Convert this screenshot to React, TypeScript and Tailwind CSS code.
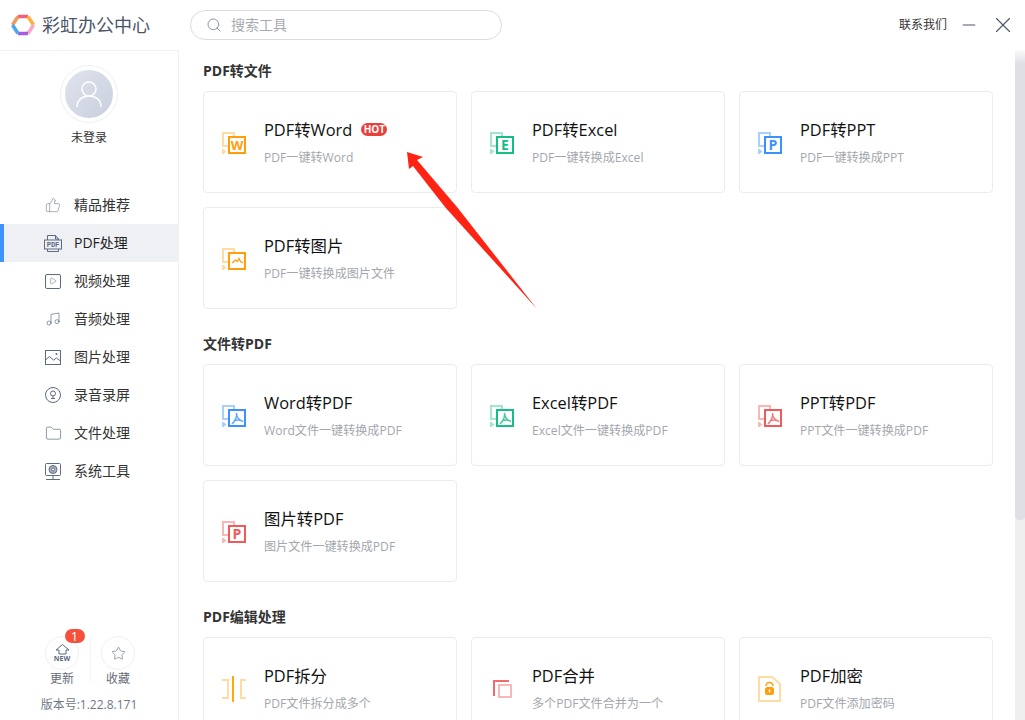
import { Search, X, Minus, ThumbsUp, Play, Music, Star, Folder } from 'lucide-react';

const FONT = "font-['Open_Sans','Noto_Sans_CJK_SC',sans-serif]";

type Tone = { main: string; pale: string };
const ORANGE: Tone = { main: '#ff9d0a', pale: '#ffdca3' };
const GREEN: Tone = { main: '#13bf85', pale: '#a3e6cf' };
const BLUE: Tone = { main: '#3d91ff', pale: '#a8cfff' };
const RED: Tone = { main: '#f25a5a', pale: '#f9b8b8' };

const DocIcon = ({ tone, inner }: { tone: Tone; inner: string }) => (
  <svg width="24" height="23" viewBox="0 0 24 23" className="shrink-0">
    <rect x="1" y="1" width="11" height="13" fill="none" stroke={tone.pale} strokeWidth="2" />
    <path d="M0 17h1.500l3 2.500l-3 2.500H0z" fill={tone.pale} />
    <rect x="7" y="5" width="16" height="16" fill="#fff" stroke={tone.main} strokeWidth="2" />
    {inner === 'pdf' && (
      <path
        d="M14.500 8c.5 4-1.500 8-4.500 11M14.500 8c0 4 2.500 7 6.500 8.500M12.500 15.500c2.500-.5 5-.5 7 0"
        fill="none"
        stroke={tone.main}
        strokeOpacity="0.8"
        strokeWidth="1.500"
      />
    )}
    {inner === 'img' && (
      <path d="M10 15l3.500-3l2 1.500l1.500-3l1.500 3l2.500 1.500" fill="none" stroke={tone.main} strokeWidth="1.300" />
    )}
    {inner !== 'pdf' && inner !== 'img' && (
      <text
        x="15"
        y="18"
        textAnchor="middle"
        fontSize={inner === 'W' ? 13 : 14}
        fontWeight="700"
        fontFamily="Open Sans, sans-serif"
        fill={tone.main}
      >
        {inner}
      </text>
    )}
  </svg>
);

const SplitIcon = () => (
  <svg width="24" height="26" viewBox="0 0 24 26" className="shrink-0">
    <path d="M0 4h6v18H0" fill="none" stroke="#ffdca3" strokeWidth="2" />
    <path d="M24 4h-5v18h5" fill="none" stroke="#ffdca3" strokeWidth="2" />
    <rect x="10" y="0" width="2" height="26" fill="#ffa90a" />
  </svg>
);

const MergeIcon = () => (
  <svg width="24" height="26" viewBox="0 0 24 26" className="shrink-0">
    <path d="M4 20V5h15" fill="none" stroke="#f26a6a" strokeWidth="2" />
    <rect x="9" y="9" width="12" height="12" fill="none" stroke="#f9b8b8" strokeWidth="2" />
  </svg>
);

const LockIcon = () => (
  <svg width="24" height="26" viewBox="0 0 24 26" className="shrink-0">
    <path d="M1 1h13l8 7v17H1z" fill="none" stroke="#ffdca3" strokeWidth="2" />
    <path d="M8 10a3.500 3.500 0 0 1 7 0" fill="none" stroke="#ff9d0a" strokeWidth="1.500" />
    <rect x="7" y="11" width="9" height="8" rx="2.500" fill="#ff9d0a" />
    <rect x="10.800" y="13.500" width="1.500" height="3" fill="#fff" />
  </svg>
);

const PdfNavIcon = () => (
  <svg width="18" height="17" viewBox="0 0 18 17" fill="none" stroke="#5c6b82" strokeWidth="1">
    <path d="M3.500 5V.5h8l3 3.500v1M3.500 14v2.500h11V14" />
    <path d="M11.500.5V4h3" />
    <rect x=".5" y="5" width="17" height="9" />
    <text x="9" y="12.300" textAnchor="middle" fontSize="7" fontWeight="700" fontFamily="Liberation Mono, monospace" fill="#5c6b82" stroke="none">
      PDF
    </text>
  </svg>
);

const ImageNavIcon = () => (
  <svg width="16" height="15" viewBox="0 0 16 15" fill="none" stroke="#5c6b82" strokeWidth="1">
    <rect x=".5" y=".5" width="15" height="14" />
    <path d="M.5 10l4-3.500l4 3.500l3-2l4 3" />
    <circle cx="11.500" cy="4" r="1" fill="#5c6b82" stroke="none" />
  </svg>
);

const MicNavIcon = () => (
  <svg width="16" height="16" viewBox="0 0 16 16" fill="none" stroke="#5c6b82" strokeWidth="1">
    <circle cx="8" cy="8" r="7.500" />
    <circle cx="8" cy="6.500" r="2.500" />
    <path d="M8 9v2.500M6 11.500h4" />
  </svg>
);

const ToolNavIcon = () => (
  <svg width="16" height="17" viewBox="0 0 16 17" fill="none" stroke="#5c6b82" strokeWidth="1">
    <rect x=".5" y=".5" width="15" height="12" rx="1" />
    <circle cx="8" cy="6.500" r="4" fill="#aab2c0" />
    <circle cx="8" cy="6.500" r="1.500" fill="#fff" />
    <path d="M8 12.500v4M1 16.500h14" />
  </svg>
);

const PlayNavIcon = () => (
  <span className="flex h-[15px] w-[16px] items-center justify-center rounded-[2px] border border-[#5c6b82]">
    <Play size={8} strokeWidth={1.5} color="#5c6b82" />
  </span>
);

const navItems = [
  { label: '精品推荐', icon: <ThumbsUp size={16} strokeWidth={1} color="#7b879b" /> },
  { label: 'PDF处理', icon: <PdfNavIcon />, active: true },
  { label: '视频处理', icon: <PlayNavIcon /> },
  { label: '音频处理', icon: <Music size={16} strokeWidth={1} color="#5c6b82" /> },
  { label: '图片处理', icon: <ImageNavIcon /> },
  { label: '录音录屏', icon: <MicNavIcon /> },
  { label: '文件处理', icon: <Folder size={17} strokeWidth={1} color="#5c6b82" /> },
  { label: '系统工具', icon: <ToolNavIcon /> },
];

const sections = [
  {
    title: 'PDF转文件',
    cards: [
      { name: 'PDF转Word', desc: 'PDF一键转Word', icon: <DocIcon tone={ORANGE} inner="W" />, hot: true },
      { name: 'PDF转Excel', desc: 'PDF一键转换成Excel', icon: <DocIcon tone={GREEN} inner="E" /> },
      { name: 'PDF转PPT', desc: 'PDF一键转换成PPT', icon: <DocIcon tone={BLUE} inner="P" /> },
      { name: 'PDF转图片', desc: 'PDF一键转换成图片文件', icon: <DocIcon tone={ORANGE} inner="img" /> },
    ],
  },
  {
    title: '文件转PDF',
    cards: [
      { name: 'Word转PDF', desc: 'Word文件一键转换成PDF', icon: <DocIcon tone={BLUE} inner="pdf" /> },
      { name: 'Excel转PDF', desc: 'Excel文件一键转换成PDF', icon: <DocIcon tone={GREEN} inner="pdf" /> },
      { name: 'PPT转PDF', desc: 'PPT文件一键转换成PDF', icon: <DocIcon tone={RED} inner="pdf" /> },
      { name: '图片转PDF', desc: '图片文件一键转换成PDF', icon: <DocIcon tone={RED} inner="P" /> },
    ],
  },
  {
    title: 'PDF编辑处理',
    cards: [
      { name: 'PDF拆分', desc: 'PDF文件拆分成多个', icon: <SplitIcon /> },
      { name: 'PDF合并', desc: '多个PDF文件合并为一个', icon: <MergeIcon /> },
      { name: 'PDF加密', desc: 'PDF文件添加密码', icon: <LockIcon /> },
    ],
  },
];

const Logo = () => (
  <svg width="24" height="24" viewBox="0 0 24 24" fill="none" strokeWidth="3.500">
    <path d="M1.500 12L7 3.500" stroke="#f59a5a" />
    <path d="M7 3.500h10" stroke="#f4607a" />
    <path d="M17 3.500L22.500 12" stroke="#fbb040" />
    <path d="M22.500 12L17 20.500" stroke="#f7a8c4" />
    <path d="M17 20.500H7" stroke="#a95be0" />
    <path d="M7 20.500L1.500 12" stroke="#4aa8ee" />
  </svg>
);

const Card = ({ name, desc, icon, hot }: { name: string; desc: string; icon: React.ReactNode; hot?: boolean }) => (
  <div className="flex h-[102px] items-center gap-[18px] rounded-[4px] border border-[#eaecef] bg-white pl-[18px]">
    <div className="flex w-6 justify-center pt-[2px]">{icon}</div>
    <div className="flex flex-col gap-[6px] pt-1">
      <div className="flex items-center gap-[9px]">
        <span className="text-[16.4px] leading-[22px] text-[#111]">{name}</span>
        {hot && (
          <span className="mb-[2px] flex h-[13px] w-[26px] items-center justify-center rounded-full bg-[#e8403a] text-[10px] leading-none font-bold text-white">
            HOT
          </span>
        )}
      </div>
      <span className="text-[12.1px] leading-[22px] text-[#a3a7ad]">{desc}</span>
    </div>
  </div>
);

export default function App() {
  return (
    <div className={`relative flex h-[720px] w-[1025px] flex-col overflow-hidden bg-white ${FONT}`}>
      <header className="flex h-[50px] shrink-0 items-center pl-[11px]">
        <Logo />
        <span className="ml-[7px] w-[148px] text-[18px] text-[#4a5568]">彩虹办公中心</span>
        <div className="flex h-[30px] w-[312px] items-center rounded-full border border-[#d9dce3] pl-[15px]">
          <Search size={16} strokeWidth={1.5} color="#8a94a6" />
          <span className="ml-[9px] text-sm text-[#a8abb2]">搜索工具</span>
        </div>
        <span className="ml-auto text-xs text-[#333]">联系我们</span>
        <Minus size={20} strokeWidth={1.2} color="#4a5568" className="ml-3" />
        <X size={26} strokeWidth={1} color="#4a5568" className="mr-[9px] ml-[11px]" />
      </header>

      <div className="flex min-h-0 flex-1">
        <aside className="flex w-[179px] shrink-0 flex-col border-t border-r border-[#f0f1f3]">
          <div className="mt-[14px] flex flex-col items-center">
            <div className="flex h-[58px] w-[58px] items-center justify-center rounded-full border border-[#eef0f5]">
              <div className="flex h-[48px] w-[48px] items-center justify-center rounded-full bg-gradient-to-br from-[#dfe3ec] to-[#c9d0de]">
                <svg width="26" height="28" viewBox="0 0 26 28" fill="none" stroke="#fff" strokeWidth="1.500">
                  <circle cx="13" cy="9" r="7" />
                  <path d="M1 27c0-7 5-11 12-11s12 4 12 11" />
                </svg>
              </div>
            </div>
            <span className="mt-[6px] text-xs leading-[18px] text-[#333]">未登录</span>
          </div>

          <nav className="mt-[39px] flex flex-col">
            {navItems.map((item) => (
              <div
                key={item.label}
                className={`flex h-[38px] items-center border-l-4 text-sm ${
                  item.active ? 'border-[#3f93ff] bg-[#eef0f3] text-[#222]' : 'border-transparent text-[#333]'
                }`}
              >
                <span className="flex w-[70px] justify-end pr-3">
                  <span className="flex w-[18px] justify-center">{item.icon}</span>
                </span>
                <span>{item.label}</span>
              </div>
            ))}
          </nav>

          <div className="mt-auto flex flex-col items-center pb-[7px]">
            <div className="flex items-start pl-[2px]">
              <div className="relative flex w-[55px] flex-col items-center">
                <div className="flex h-[34px] w-[34px] flex-col items-center justify-center rounded-full border border-[#eef0f3]">
                  <svg width="15" height="11" viewBox="0 0 15 11" fill="none" stroke="#5c6b82" strokeWidth="1">
                    <path d="M7.500 .5L14 6h-3v4H4V6H1z" />
                  </svg>
                  <span className="text-[7px] leading-[7px] font-bold text-[#5c6b82]">NEW</span>
                </div>
                <span className="absolute top-[-7px] left-[30px] flex h-[14px] w-[20px] items-center justify-center rounded-full bg-[#f5513a] text-[13px] leading-none text-white">
                  1
                </span>
                <span className="mt-px text-xs leading-[16px] text-[#666c78]">更新</span>
              </div>
              <div className="h-[46px] w-px bg-[#f3f4f6]" />
              <div className="flex w-[55px] flex-col items-center">
                <div className="flex h-[34px] w-[34px] items-center justify-center rounded-full border border-[#eef0f3]">
                  <Star size={15} strokeWidth={1} color="#5c6b82" />
                </div>
                <span className="mt-px text-xs leading-[16px] text-[#666c78]">收藏</span>
              </div>
            </div>
            <span className="mt-[10px] text-xs leading-[16px] text-[#6f7888]">版本号:1.22.8.171</span>
          </div>
        </aside>

        <main className="min-w-0 flex-1 overflow-hidden pt-[11px] pl-6">
          {sections.map((section) => (
            <section key={section.title} className="mb-[25px]">
              <h2 className="mb-[11px] text-sm leading-[19px] font-bold text-[#333]">{section.title}</h2>
              <div className="grid w-[790px] grid-cols-3 gap-[14px]">
                {section.cards.map((card) => (
                  <Card key={card.name} {...card} />
                ))}
              </div>
            </section>
          ))}
        </main>
      </div>

      {/* scrollbar */}
      <div className="absolute top-[50px] right-0 bottom-0 w-[10px] bg-[#efefef]">
        <div className="h-[470px] rounded-b-[4px] bg-gradient-to-b from-[#fbfbfc] to-[#dfe0e6] to-[3%]" />
      </div>

      {/* red annotation arrow */}
      <svg className="absolute top-0 left-0" width="1025" height="720" fill="none">
        <path d="M407 152L423 157L417 160L457 207L537 309L445 207L413 166L409 169z" fill="#ff2314" />
      </svg>
    </div>
  );
}
